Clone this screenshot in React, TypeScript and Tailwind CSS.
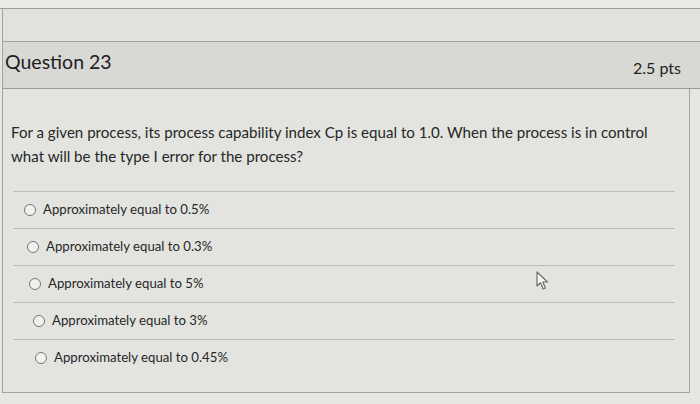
import React from "react";

const options = [
  { label: "Approximately equal to 0.5%", pad: "pl-[11px]" },
  { label: "Approximately equal to 0.3%", pad: "pl-[14px]" },
  { label: "Approximately equal to 5%", pad: "pl-[16px]" },
  { label: "Approximately equal to 3%", pad: "pl-[20px]" },
  { label: "Approximately equal to 0.45%", pad: "pl-[22px]" },
];

function Cursor() {
  return (
    <svg
      width="14"
      height="20"
      viewBox="0 0 14 20"
      className="absolute left-[536px] top-[271px]"
    >
      <path
        d="M1 1 L1 15 L4.5 11.8 L7.2 18 L9.4 17 L6.8 11 L11.5 11 Z"
        fill="#f4f4f2"
        stroke="#6d6e6b"
        strokeWidth="1.2"
        strokeLinejoin="round"
      />
    </svg>
  );
}

export default function App() {
  return (
    <div
      className="relative w-[700px] h-[404px] overflow-hidden bg-[#e6e7e3] text-[#262726]"
      style={{ fontFamily: "Lato, 'Open Sans', sans-serif" }}
    >
      {/* strips above the question card */}
      <div className="h-[9px] bg-[#e9e9e6] border-b border-[#9c9d99]" />
      <div className="h-[33px] bg-[#e1e2de] border-b border-[#a2a3a0] ml-[2px] border-l border-l-[#a2a3a0]" />

      <div className="ml-[2px] border-l border-[#a2a3a0]">
        {/* header */}
        <div className="h-[47px] flex items-start justify-between bg-[#d8d9d5] border-b border-[#9a9b97] pl-[2px] pr-[19px]">
          <h2 className="text-[19.5px] leading-none mt-[10px] font-normal text-[#1f201f]">
            Question 23
          </h2>
          <span className="text-[16px] leading-none mt-[18px] text-[#1f201f]">2.5 pts</span>
        </div>

        {/* body */}
        <div className="relative h-[304px] mr-[10px] border-r border-b border-[#a4a5a1] bg-[#e3e4e0]">
          <p className="pl-[8px] pr-[20px] pt-[31px] text-[15.1px] leading-[24px]">
            For a given process, its process capability index Cp is equal to 1.0.
            When the process is in control what will be the type I error for the
            process?
          </p>

          <div className="mt-[23px] ml-[10px] mr-[14px]">
            {options.map((opt) => (
              <div
                key={opt.label}
                className={`h-[37px] flex items-center gap-[7px] border-t border-[#bdbeba] ${opt.pad}`}
              >
                <span className="w-[12px] h-[12px] rounded-full border border-[#777875] bg-[#f1f1ef]" />
                <span className="text-[13.2px] leading-none">{opt.label}</span>
              </div>
            ))}
          </div>
        </div>
      </div>

      <Cursor />
    </div>
  );
}
